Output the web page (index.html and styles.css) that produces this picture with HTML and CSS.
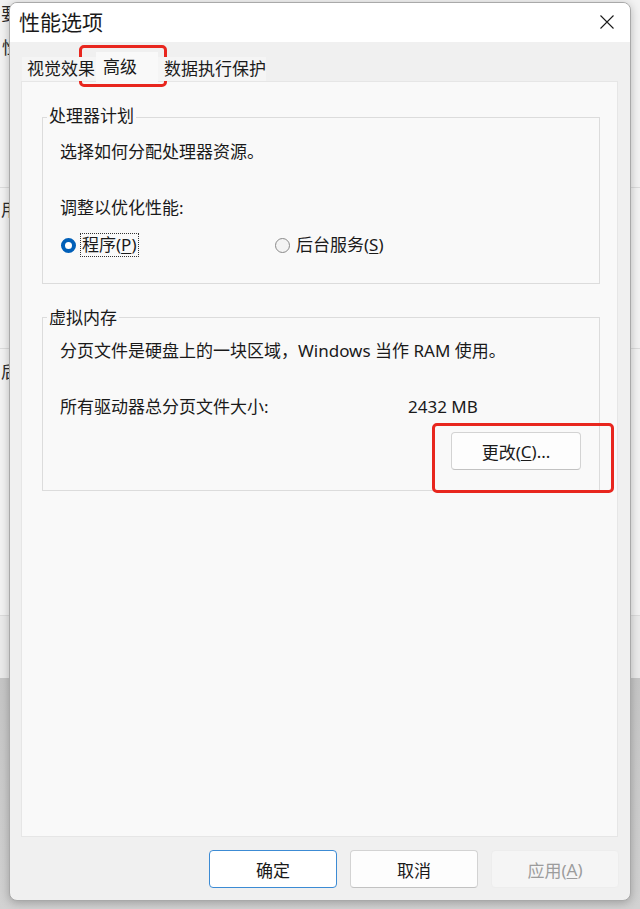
FILE: index.html
```html
<!DOCTYPE html>
<html lang="zh-CN">
<head>
<meta charset="utf-8">
<title>性能选项</title>
<link rel="stylesheet" href="styles.css">
</head>
<body>
<div class="desktop">
  <div class="backdrop">
    <div class="bg-row r1"><span class="bg-char">要</span><span class="bg-char second">性</span></div>
    <div class="bg-row r2"><span class="bg-char">用</span></div>
    <div class="bg-row r3"><span class="bg-char">后</span></div>
    <div class="bg-row r4"></div>
    <div class="bg-row r5"></div>
  </div>

  <div class="dialog">
    <div class="titlebar">
      <span class="title">性能选项</span>
      <span class="close" aria-label="关闭">
        <svg width="14" height="14" viewBox="0 0 14 14"><path d="M0.5 0.5L13.5 13.5M13.5 0.5L0.5 13.5" stroke="#1b1b1b" stroke-width="1.1" fill="none"/></svg>
      </span>
    </div>

    <div class="tabs">
      <div class="tab t1">视觉效果</div>
      <div class="tab t2 active">高级</div>
      <div class="tab t3">数据执行保护</div>
    </div>

    <div class="panel">
      <div class="group g1">
        <div class="gtitle">处理器计划</div>
        <p class="line l1">选择如何分配处理器资源。</p>
        <p class="line l2">调整以优化性能:</p>
        <div class="radios">
          <div class="radio r-first"><span class="dot on"></span><span class="rlabel focus">程序(<u>P</u>)</span></div>
          <div class="radio"><span class="dot"></span><span class="rlabel">后台服务(<u>S</u>)</span></div>
        </div>
      </div>

      <div class="group g2">
        <div class="gtitle">虚拟内存</div>
        <p class="line l1">分页文件是硬盘上的一块区域，Windows 当作 RAM 使用。</p>
        <div class="line l2 size-row"><span>所有驱动器总分页文件大小:</span><span>2432 MB</span></div>
        <div class="btn-row"><span class="btn change">更改(<u>C</u>)...</span></div>
      </div>
    </div>

    <div class="footer">
      <span class="btn primary">确定</span>
      <span class="btn">取消</span>
      <span class="btn disabled">应用(<u>A</u>)</span>
    </div>
  </div>

  <div class="mark mark-tab"></div>
  <div class="mark mark-btn"></div>
</div>
</body>
</html>
```

FILE: styles.css
```css
* { box-sizing: border-box; }

html, body {
  margin: 0;
  padding: 0;
}

body {
  width: 640px;
  height: 909px;
  overflow: hidden;
  font-family: "Noto Sans", "Noto Sans CJK SC", sans-serif;
  color: #1a1a1a;
  background: #cfcfcf;
}

.desktop {
  position: relative;
  width: 640px;
  height: 909px;
}

/* window behind the dialog */
.backdrop {
  display: flex;
  flex-direction: column;
  height: 909px;
}

.bg-row {
  border-bottom: 1px solid #dcdcdc;
  background: #f3f3f3;
  display: flex;
  flex-direction: column;
  padding-left: 1px;
  font-size: 17px;
  line-height: 20px;
  color: #2a2a2a;
}

.r1 { height: 188px; padding-top: 4px; }
.r2 { height: 161px; padding-top: 12px; }
.r3 { height: 267px; padding-top: 13px; }
.r4 { height: 62px; background: #ebebeb; border-bottom: none; }
.r5 { flex: 1; background: linear-gradient(#c6c6c6, #d2d2d2); border-bottom: none; }

.bg-char.second { margin-top: 14px; padding-left: 1px; }

/* dialog window */
.dialog {
  position: absolute;
  left: 9px;
  top: 2px;
  width: 622px;
  height: 899px;
  border: 1px solid #a9a9a9;
  border-radius: 8px;
  background: #f0f0f0;
  box-shadow: 0 2px 10px rgba(0, 0, 0, 0.25);
  display: flex;
  flex-direction: column;
  overflow: hidden;
}

.titlebar {
  height: 39px;
  flex: none;
  background: #ffffff;
  display: flex;
  align-items: center;
  padding-left: 9px;
  padding-right: 16px;
}

.title {
  font-size: 21px;
  line-height: 28px;
  margin-top: -2px;
}

.close {
  margin-left: auto;
  display: flex;
  width: 14px;
  height: 14px;
  margin-top: -1px;
}

/* tabs */
.tabs {
  height: 39px;
  flex: none;
  display: flex;
  align-items: flex-end;
  padding-left: 12px;
  font-size: 17px;
  position: relative;
  z-index: 1;
}

.tab {
  height: 24px;
  line-height: 24px;
  background: #f5f5f5;
  white-space: nowrap;
  overflow: hidden;
}

.t1 { width: 74px; padding-left: 5px; }
.t2 { width: 62px; padding-left: 7px; }
.t3 { width: 108px; padding-left: 6px; }

.tab.active {
  height: 30px;
  line-height: 29px;
  background: #f9f9f9;
  margin-bottom: -1px;
}

/* panel */
.panel {
  flex: 1;
  margin: 0 12px 0 11px;
  background: #f9f9f9;
  border: 1px solid #e6e6e6;
  padding: 35px 17px 0 20px;
  font-size: 17px;
}

.group {
  border: 1px solid #dcdcdc;
  padding: 0 18px 0 17px;
}

.g1 { padding-bottom: 26px; }
.g2 { margin-top: 33px; padding-bottom: 20px; }

.gtitle {
  width: max-content;
  margin: -12px 0 0 -13px;
  padding: 0 2px;
  line-height: 20px;
  background: #f9f9f9;
}

.g2 .gtitle { line-height: 22px; margin-top: -12px; padding-top: 1px; height: 22px; }

.line {
  margin: 0;
  line-height: 22px;
  white-space: nowrap;
}

.g1 .l1 { margin-top: 15px; }
.g2 .l1 { margin-top: 12px; }
.l2 { margin-top: 34px; }

.radios {
  display: flex;
  align-items: center;
  margin-top: 14px;
}

.radio {
  display: flex;
  align-items: center;
  padding-left: 1px;
}

.r-first { width: 214px; }

.dot {
  width: 15px;
  height: 15px;
  border-radius: 50%;
  border: 1px solid #8a8a8a;
  background: #f3f3f3;
  margin-right: 4px;
  flex: none;
}

.dot.on {
  border: 4.5px solid #005fb8;
  background: #ffffff;
}

.rlabel {
  border: 1px dotted transparent;
  padding: 0 1px;
  line-height: 22px;
}

.rlabel.focus { border-color: #333; }

u {
  text-decoration: underline;
  text-underline-offset: 2px;
  text-decoration-thickness: 1px;
}

.size-row {
  display: grid;
  grid-template-columns: 348px auto;
}

.btn-row {
  display: flex;
  justify-content: flex-end;
  margin-top: 14px;
}

.btn {
  display: flex;
  align-items: center;
  justify-content: center;
  height: 38px;
  border: 1px solid #d3d3d3;
  border-bottom-color: #c2c2c2;
  border-radius: 4px;
  background: #fdfdfd;
  font-size: 17px;
  color: #1a1a1a;
}

.change { width: 130px; }

.footer {
  height: 63px;
  flex: none;
  display: flex;
  justify-content: flex-end;
  gap: 13px;
  padding: 13px 11px 0 0;
}

.footer .btn { width: 128px; }

.btn.primary {
  border: 1px solid #3c8bd4;
  background: #ffffff;
}

.btn.disabled {
  background: #f5f5f5;
  border-color: #ededed;
  color: #9c9c9c;
}

/* red annotation frames */
.mark {
  position: absolute;
  border: 3px solid #e8261e;
  border-radius: 5px;
}

.mark-tab {
  left: 79px;
  top: 45px;
  width: 88px;
  height: 42px;
}

.mark-btn {
  left: 432px;
  top: 423px;
  width: 182px;
  height: 70px;
}
```
